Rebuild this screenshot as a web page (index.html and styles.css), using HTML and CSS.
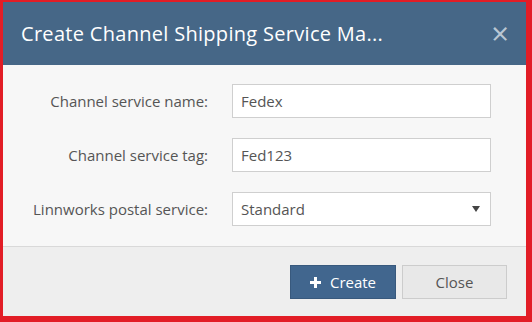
FILE: index.html
```html
<!DOCTYPE html>
<html>

<head>
    <title>Create Channel Shipping Service Mapping</title>
    <link rel="stylesheet" href="styles.css">
</head>

<body>
    <div class="modal">
        <div class="modal-header">
            <h1 class="modal-title">Create Channel Shipping Service Ma...</h1>
            <span class="modal-close">&times;</span>
        </div>

        <div class="modal-body">
            <label for="service-name">Channel service name:</label>
            <input type="text" id="service-name" value="Fedex">

            <label for="service-tag">Channel service tag:</label>
            <input type="text" id="service-tag" value="Fed123">

            <label for="postal-service">Linnworks postal service:</label>
            <div class="select">
                <span id="postal-service">Standard</span>
                <span class="caret"></span>
            </div>
        </div>

        <div class="modal-footer">
            <button class="btn btn-primary">
                <svg class="plus" width="11" height="11" viewBox="0 0 11 11">
                    <path d="M4 0h3v4h4v3h-4v4h-3v-4h-4v-3h4z" fill="#fff" />
                </svg>
                Create
            </button>
            <button class="btn btn-default">Close</button>
        </div>
    </div>
</body>

</html>
```

FILE: styles.css
```css
/* Page */
body {
    margin: 0;
    font-family: "Open Sans", "Liberation Sans", sans-serif;
    font-size: 15px;
    color: #555;
}

/* The dialog with its red outline */
.modal {
    height: 322px;
    box-sizing: border-box;
    border-style: solid;
    border-color: #e21d26;
    border-width: 2px 6px 6px 3px;
    display: flex;
    flex-direction: column;
    background-color: #eeeeee;
}

/* Header */
.modal-header {
    height: 63px;
    background-color: #466787;
    display: flex;
    align-items: center;
    justify-content: space-between;
    padding: 0 17px 0 18px;
}

.modal-title {
    margin: 0;
    font-size: 20px;
    font-weight: normal;
    color: #fff;
    letter-spacing: 0.3px;
}

.modal-close {
    font-size: 31px;
    line-height: 1;
    color: #b9c6d3;
}

/* Body */
.modal-body {
    display: grid;
    grid-template-columns: 190px 1fr;
    column-gap: 24px;
    row-gap: 20px;
    align-items: center;
    padding: 19px 35px 20px 15px;
    background-color: #f7f7f7;
    border-bottom: 1px solid #d9d9d9;
}

.modal-body label {
    text-align: right;
    color: #555;
}

.modal-body input,
.select {
    height: 34px;
    box-sizing: border-box;
    border: 1px solid #cfcfcf;
    background-color: #fff;
    padding: 0 8px;
    font-family: inherit;
    font-size: 15px;
    color: #555;
    width: 100%;
    margin: 0;
}

.select {
    display: flex;
    align-items: center;
    justify-content: space-between;
    padding-right: 10px;
}

.caret {
    width: 0;
    height: 0;
    border-left: 4px solid transparent;
    border-right: 4px solid transparent;
    border-top: 6px solid #444;
}

/* Footer */
.modal-footer {
    flex: 1;
    display: flex;
    justify-content: flex-end;
    align-items: flex-start;
    gap: 6px;
    padding: 18px 19px 0 0;
}

.btn {
    height: 34px;
    box-sizing: border-box;
    font-family: inherit;
    font-size: 15px;
    border-radius: 0;
    cursor: pointer;
}

.btn-primary {
    width: 106px;
    background-color: #41668e;
    border: 1px solid #38597d;
    color: #fff;
    display: flex;
    align-items: center;
    justify-content: center;
    gap: 9px;
}

.btn-default {
    width: 105px;
    background-color: #e8e8e8;
    border: 1px solid #cccccc;
    color: #555;
}
```
